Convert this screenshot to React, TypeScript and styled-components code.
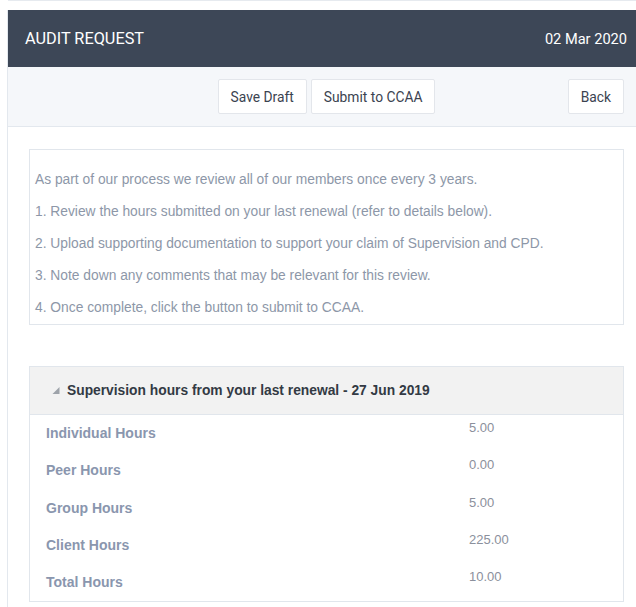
import React from "react";
import styled, { createGlobalStyle } from "styled-components";

const GlobalStyle = createGlobalStyle`
  html, body {
    margin: 0;
    padding: 0;
    background: #ffffff;
  }
  body {
    font-family: "Liberation Sans", Arial, sans-serif;
  }
  * {
    box-sizing: border-box;
  }
`;

const Page = styled.div`
  border-top: 1px solid #e6eaef;
  margin-left: 8px;
  padding-top: 9px;
  min-height: 606px;
`;

const Shell = styled.div`
  display: flex;
  flex-direction: column;
  border-left: 1px solid #e3e8ee;
  margin-left: -1px;
  min-height: 597px;
`;

const TitleBar = styled.header`
  display: flex;
  align-items: center;
  justify-content: space-between;
  height: 57px;
  padding: 0 9px 0 17px;
  background: #3d4757;
  color: #ffffff;
  font-family: Roboto, "Liberation Sans", sans-serif;
`;

const Title = styled.span`
  font-size: 16.3px;
`;

const DateText = styled.span`
  font-size: 14.6px;
`;

const Toolbar = styled.div`
  display: grid;
  grid-template-columns: 1fr auto 1fr;
  align-items: center;
  height: 60px;
  padding: 0 12px 0 21px;
  background: #f5f7fa;
  border-bottom: 1px solid #e3e8ee;
`;

const ButtonGroup = styled.div<{ $align: "center" | "end" }>`
  display: flex;
  gap: 4px;
  grid-column: ${(p) => (p.$align === "center" ? 2 : 3)};
  justify-content: ${(p) => (p.$align === "center" ? "center" : "flex-end")};
`;

const Button = styled.button`
  height: 35px;
  padding: 0 12px;
  background: #ffffff;
  border: 1px solid #e3e6eb;
  border-radius: 2px;
  color: #3b4350;
  font-family: Roboto, "Liberation Sans", sans-serif;
  font-size: 13.8px;
  cursor: pointer;
`;

const Content = styled.main`
  display: flex;
  flex-direction: column;
  gap: 41px;
  padding: 22px 12px 0 21px;
`;

const Notice = styled.section`
  display: flex;
  flex-direction: column;
  padding: 14px 5px 0;
  border: 1px solid #e1e6ec;
  color: #8d97a8;
  font-size: 13.8px;
`;

const NoticeLine = styled.p`
  margin: 0;
  line-height: 32px;
`;

const Panel = styled.section`
  border: 1px solid #e1e6ec;
`;

const PanelHeader = styled.div`
  display: flex;
  align-items: center;
  gap: 7px;
  height: 48px;
  padding-left: 21px;
  background: #f2f2f2;
  border-bottom: 1px solid #e1e6ec;
  color: #333a44;
  font-size: 13.8px;
  font-weight: bold;
`;

const HoursRow = styled.div`
  display: grid;
  grid-template-columns: 423px 1fr;
  align-items: start;
  height: 37.3px;
  padding-left: 16px;
`;

const HoursLabel = styled.span`
  line-height: 37px;
  color: #8a96ae;
  font-size: 14px;
  font-weight: bold;
`;

const HoursValue = styled.span`
  padding-top: 4px;
  line-height: 18px;
  color: #8b909c;
  font-size: 13px;
`;

const instructions = [
  "As part of our process we review all of our members once every 3 years.",
  "1. Review the hours submitted on your last renewal (refer to details below).",
  "2. Upload supporting documentation to support your claim of Supervision and CPD.",
  "3. Note down any comments that may be relevant for this review.",
  "4. Once complete, click the button to submit to CCAA.",
];

const hours = [
  { label: "Individual Hours", value: "5.00" },
  { label: "Peer Hours", value: "0.00" },
  { label: "Group Hours", value: "5.00" },
  { label: "Client Hours", value: "225.00" },
  { label: "Total Hours", value: "10.00" },
];

const Caret = () => (
  <svg width="9" height="9" viewBox="0 0 9 9" aria-hidden="true">
    <path d="M8.5 1 L8.5 8 L1.5 8 Z" fill="#9ea3aa" />
  </svg>
);

export default function App() {
  return (
    <>
      <GlobalStyle />
      <Page>
        <Shell>
          <TitleBar>
            <Title>AUDIT REQUEST</Title>
            <DateText>02 Mar 2020</DateText>
          </TitleBar>
          <Toolbar>
            <ButtonGroup $align="center">
              <Button>Save Draft</Button>
              <Button>Submit to CCAA</Button>
            </ButtonGroup>
            <ButtonGroup $align="end">
              <Button>Back</Button>
            </ButtonGroup>
          </Toolbar>
          <Content>
            <Notice>
              {instructions.map((line) => (
                <NoticeLine key={line}>{line}</NoticeLine>
              ))}
            </Notice>
            <Panel>
              <PanelHeader>
                <Caret />
                <span>Supervision hours from your last renewal - 27 Jun 2019</span>
              </PanelHeader>
              {hours.map((h) => (
                <HoursRow key={h.label}>
                  <HoursLabel>{h.label}</HoursLabel>
                  <HoursValue>{h.value}</HoursValue>
                </HoursRow>
              ))}
            </Panel>
          </Content>
        </Shell>
      </Page>
    </>
  );
}
